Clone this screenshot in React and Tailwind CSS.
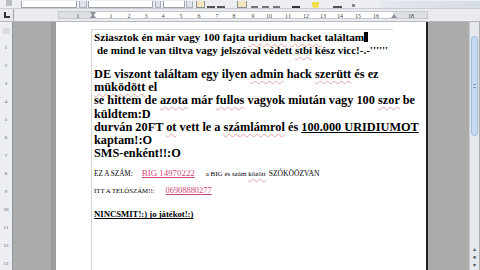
import React from 'react';

const serif = { fontFamily: '"Liberation Serif", "Times New Roman", serif' };

const hNums = [
  [77, '1'], [110, '1'], [128, '2'], [145, '3'], [162, '4'], [180, '5'], [198, '6'], [216, '7'], [233, '8'],
  [252, '9'], [268, '10'], [287, '11'], [305, '12'], [322, '13'], [339, '14'], [357, '15'], [375, '16'], [410, '18'],
];

const vNums = ['1', '2', '3', '4', '5', '6', '7', '8', '9', '10', '11', '12', '13'];

function Sq({ children }) {
  return <span className="underline decoration-wavy decoration-[#e9a3a3] decoration-1 underline-offset-2">{children}</span>;
}

function Toolbar() {
  return (
    <div className="h-[9px] bg-[#eceef2] flex items-end overflow-hidden border-b border-[#c9ccd2]">
      <div className="w-[6px] h-[6px] ml-[6px] mb-[2px] bg-[#b8bcc4]" />
      <div className="ml-[9px] w-[56px] h-[7px] bg-white border border-[#9aa2ae] border-t-0" />
      <div className="ml-[2px] w-[8px] h-[7px] bg-[#dfe2e8] border border-[#aab0ba] border-t-0" />
      <div className="ml-[1px] w-[65px] h-[7px] bg-white border border-[#9aa2ae] border-t-0" />
      <div className="ml-[2px] w-[6px] h-[7px] bg-[#dfe2e8] border border-[#aab0ba] border-t-0" />
      <div className="ml-[2px] w-[22px] h-[7px] bg-white border border-[#9aa2ae] border-t-0" />
      <div className="ml-[1px] w-[7px] h-[7px] bg-[#dfe2e8] border border-[#aab0ba] border-t-0" />
      <div className="ml-[3px] w-[9px] h-[7px] bg-[#f4e7c0] border border-[#8a8f98] border-t-0" />
      <div className="ml-[2px] w-[8px] h-[6px] border-b-2 border-[#555]" />
      <div className="ml-[2px] w-[8px] h-[6px] border-b-2 border-[#555]" />
      <div className="ml-[12px] w-[10px] h-[7px] bg-[#f4e7c0] border border-[#8a8f98] border-t-0" />
      <div className="ml-[4px] w-[7px] h-[5px] border-b-2 border-[#777]" />
      <div className="ml-[4px] w-[7px] h-[5px] border-b-2 border-[#777]" />
      <div className="ml-[4px] w-[7px] h-[5px] border-b-2 border-[#777]" />
      <div className="ml-[12px] w-[8px] h-[5px] border-b-2 border-[#333]" />
      <div className="ml-[12px] w-[7px] h-[6px] rounded-b bg-[#f5e04a]" />
      <div className="ml-[14px] w-[9px] h-[6px] border-b-2 border-[#555]" />
      <div className="ml-[10px] w-[3px] h-[3px] mb-[1px] bg-[#888]" />
      <div className="ml-auto w-[100px] h-[7px] bg-gradient-to-r from-[#e4e8ef] to-[#d6dce6]" />
    </div>
  );
}

function Ruler() {
  return (
    <div className="h-[13px] flex bg-[#e9ebef] border-b border-[#b4b8c0]">
      <div className="w-[14px] flex items-center justify-center border-r border-[#9da3ad]">
        <div className="w-[6px] h-[6px] border-l-2 border-b-2 border-[#333]" />
      </div>
      <div className="w-[44px]" />
      <div className="relative w-[370px] my-[2px] bg-white border border-[#c4c8ce]" style={serif}>
        <div className="absolute left-0 top-0 bottom-0 w-[34px] bg-[#dcdfe4]" />
        <div className="absolute right-0 top-0 bottom-0 w-[34px] bg-[#dcdfe4]" />
        {hNums.map(([x, n]) => (
          <span key={x} className="absolute top-[0px] text-[6px] leading-[8px] text-[#444] -translate-x-1/2" style={{ left: x - 58 }}>
            {n}
          </span>
        ))}
        <div className="absolute left-[31px] top-0 w-[6px] h-[4px] border-x-[3px] border-t-[4px] border-x-transparent border-t-[#8a8f98]" />
        <div className="absolute left-[31px] bottom-0 w-[6px] h-[4px] border-x-[3px] border-b-[4px] border-x-transparent border-b-[#8a8f98]" />
        <div className="absolute left-[332px] bottom-0 w-[6px] h-[4px] border-x-[3px] border-b-[4px] border-x-transparent border-b-[#8a8f98]" />
      </div>
    </div>
  );
}

export default function App() {
  return (
    <div className="w-[480px] h-[270px] overflow-hidden flex flex-col bg-[#ababab]">
      <Toolbar />
      <Ruler />
      <div className="flex flex-1 min-h-0">
        {/* vertical ruler */}
        <div className="w-[13px] bg-[#eceef1] border-r border-[#8e949e] flex flex-col items-center pt-[6px] gap-[10px]" style={serif}>
          <div className="w-[7px] h-[6px] bg-[#d8dbe0]" />
          {vNums.map((n) => (
            <span key={n} className="text-[5px] leading-[8px] text-[#555]">{n}</span>
          ))}
        </div>

        <div className="w-[38px]" />
        <div className="w-[5px] bg-[#9c9c9c]" />

        {/* page */}
        <div className="w-[372px] bg-white border-r-2 border-[#222] pl-[35px] pt-[7px]">
          <div className="border-l border-t border-[#d4d4d4] w-[302px] h-[300px] pl-[2px] pt-[1px] text-black" style={serif}>
            <p className="font-bold text-[11.2px] leading-[13px] whitespace-nowrap">
              Sziasztok én már vagy 100 fajta <Sq>uridium</Sq> <Sq>hacket</Sq> találtam
              <span className="inline-block w-[4px] h-[10px] bg-black align-[-1px]" />
            </p>
            <p className="font-bold text-[11px] leading-[13px] whitespace-nowrap pl-[3px]">
              de mind le van tiltva vagy jelszóval védett <Sq>stbi</Sq> kész vicc!-.-''''''
            </p>

            <div className="mt-[11px] font-bold text-[12.3px] leading-[13.2px] whitespace-nowrap">
              <p>DE viszont találtam egy ilyen <Sq>admin</Sq> hack <Sq>szerütt</Sq> és ez</p>
              <p><Sq>müködött</Sq> el</p>
              <p>se hittem de <Sq>azota</Sq> már <Sq>fullos</Sq> vagyok miután vagy 100 <Sq>szor</Sq> be</p>
              <p>küldtem:D</p>
              <p>durván 20FT <Sq>ot</Sq> vett le a <Sq>számlámrol</Sq> és <span className="underline underline-offset-1">100.000 URIDIUMOT</span></p>
              <p>kaptam!:O</p>
              <p>SMS-enként!!:O</p>
            </div>

            <p className="mt-[8px] text-[7.2px] leading-[10px] whitespace-nowrap">
              EZ A SZÁM:
              <span className="ml-[9px] text-[8.9px] text-[#d0457c] underline underline-offset-1">BIG 14970222</span>
              <span className="ml-[11px] text-[7px]">a BIG és szám <Sq>között</Sq></span>
              <span className="ml-[3px] text-[7.6px]">SZÓKÖÖZVAN</span>
            </p>
            <p className="mt-[7px] text-[6.8px] leading-[10px] whitespace-nowrap">
              ITT A TELÓSZÁM!!:
              <span className="ml-[11px] text-[8.4px] text-[#d0457c] underline underline-offset-1">06908880277</span>
            </p>
            <p className="mt-[13px] text-[8.7px] leading-[10px] font-bold underline underline-offset-1 whitespace-nowrap">
              NINCSMIT!:) jo játékot!:)
            </p>
          </div>
        </div>

        <div className="w-[41px]" />

        {/* scrollbar */}
        <div className="w-[10px] bg-[#e4e7ec] border-l border-[#c8ccd3] flex flex-col">
          <div className="h-[14px]" />
          <div className="h-[100px] mx-[1px] bg-[#c6dbf0] border border-[#9fbbd8] rounded-sm flex items-center justify-center">
            <div className="w-[3px] h-[4px] border-y border-[#7c98b8]" />
          </div>
          <div className="flex-1" />
          <div className="flex flex-col items-center gap-[2px] pb-[2px] text-[6px] leading-[6px] text-[#555]">
            <span>▴</span>
            <span>●</span>
            <span>▾</span>
          </div>
        </div>
      </div>
    </div>
  );
}
